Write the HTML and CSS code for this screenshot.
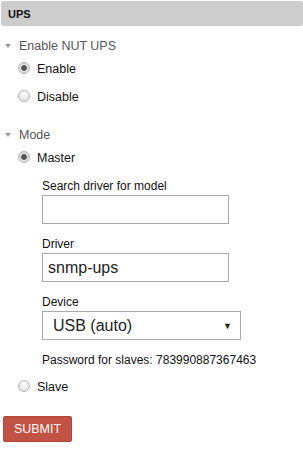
FILE: index.html
```html
<html>
<head>
	<title>UPS</title>
	<link rel="stylesheet" href="styles.css">
</head>
<body>

	<div class="header">UPS</div>

	<div class="group first">
		<div class="legend"><span class="caret"></span>Enable NUT UPS</div>
		<label class="option"><input type="radio" name="nut" checked><span>Enable</span></label>
		<label class="option"><input type="radio" name="nut"><span>Disable</span></label>
	</div>

	<div class="group">
		<div class="legend"><span class="caret"></span>Mode</div>
		<label class="option"><input type="radio" name="mode" checked><span>Master</span></label>
		<div class="fields">
			<label class="field">
				<span class="flabel">Search driver for model</span>
				<input type="text" class="text">
			</label>
			<label class="field">
				<span class="flabel">Driver</span>
				<input type="text" class="text" value="snmp-ups">
			</label>
			<label class="field">
				<span class="flabel">Device</span>
				<span class="select">USB (auto)<span class="arrow">&#9660;</span></span>
			</label>
			<div class="note">Password for slaves: 783990887367463</div>
		</div>
		<label class="option"><input type="radio" name="mode"><span>Slave</span></label>
	</div>

	<button type="button" class="submit">SUBMIT</button>

</body>
</html>
```

FILE: styles.css
```css
body {
	margin: 0;
	background: white;
	color: #222;
	font-family: "Liberation Sans", Arial, sans-serif;
	font-size: 12px;
}
.header {
	margin: 1px 0 0 1px;
	height: 25px;
	line-height: 26px;
	padding-left: 7px;
	background: #cccccc;
	border-radius: 3px;
	font-weight: bold;
	font-size: 11px;
	color: #111;
}
.group {
	margin-top: 14px;
}
.group.first {
	margin-top: 10px;
}
.legend {
	display: flex;
	align-items: center;
	height: 19px;
	padding-left: 5px;
	font-size: 12.5px;
	color: #555;
}
.caret {
	width: 0;
	height: 0;
	border-left: 3.5px solid transparent;
	border-right: 3.5px solid transparent;
	border-top: 4px solid #999;
	margin-right: 8px;
	margin-top: 1px;
}
.option {
	display: flex;
	align-items: center;
	height: 28px;
	padding-left: 18px;
	font-size: 12.5px;
	color: #111;
}
.option input {
	appearance: none;
	-webkit-appearance: none;
	width: 12px;
	height: 12px;
	margin: 0 7px 0 0;
	border-radius: 50%;
	border: 1px solid #b5b5b5;
	background: radial-gradient(circle at 50% 35%, #ffffff, #d6d6d6);
	position: relative;
	top: -1px;
}
.option input:checked {
	background: radial-gradient(circle, #555 0, #555 2.5px, #e2e2e2 3.2px, #cfcfcf 100%);
}
.fields {
	padding-left: 42px;
	padding-top: 7px;
}
.field {
	display: block;
	margin-bottom: 13px;
}
.flabel {
	display: block;
	line-height: 14px;
	margin-bottom: 2px;
	color: #111;
}
.text {
	display: block;
	box-sizing: border-box;
	width: 187px;
	height: 29px;
	margin: 0;
	padding: 0 5px;
	border: 1px solid #a9a9a9;
	font-family: "Liberation Sans", Arial, sans-serif;
	font-size: 16px;
	color: #222;
	outline: none;
}
.select {
	display: flex;
	align-items: center;
	justify-content: space-between;
	box-sizing: border-box;
	width: 199px;
	height: 29px;
	margin-top: 1px;
	padding: 0 8px 0 10px;
	border: 1px solid #a9a9a9;
	font-size: 16px;
	color: #222;
}
.arrow {
	font-size: 9px;
	color: #222;
}
.note {
	line-height: 14px;
	margin-top: 4px;
	margin-bottom: 6px;
	color: #111;
}
.submit {
	display: block;
	margin: 15px 0 0 3px;
	width: 69px;
	height: 26px;
	padding: 0;
	border: 1px solid #b0473a;
	border-radius: 2px;
	background: #c25243;
	color: white;
	font-family: "Liberation Sans", Arial, sans-serif;
	font-size: 12.5px;
}
```
